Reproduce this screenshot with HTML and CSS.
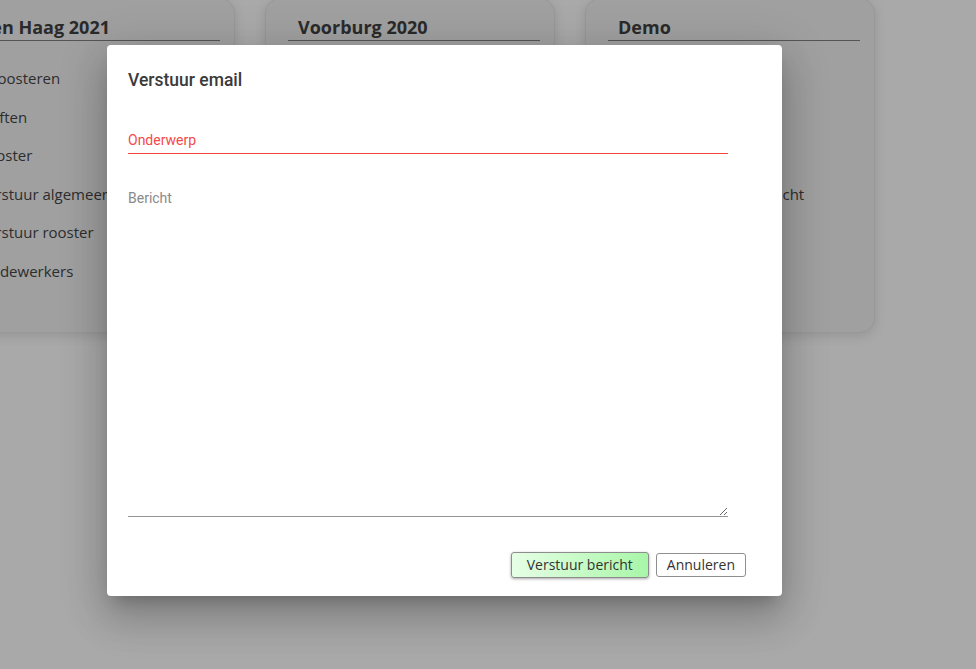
FILE: index.html
```html
<!DOCTYPE html>
<html lang="nl">
<head>
<meta charset="utf-8">
<title>Verstuur email</title>
<link rel="stylesheet" href="styles.css">
</head>
<body>
<main class="cards">
  <section class="card">
    <h2 class="card-title">Den Haag 2021</h2>
    <ul class="menu">
      <li>Inroosteren</li>
      <li>Shiften</li>
      <li>Rooster</li>
      <li>Verstuur algemeen bericht</li>
      <li>Verstuur rooster</li>
      <li>Medewerkers</li>
    </ul>
  </section>
  <section class="card">
    <h2 class="card-title">Voorburg 2020</h2>
    <ul class="menu">
      <li>Inroosteren</li>
      <li>Shiften</li>
      <li>Rooster</li>
      <li>Verstuur algemeen bericht</li>
      <li>Verstuur rooster</li>
      <li>Medewerkers</li>
    </ul>
  </section>
  <section class="card">
    <h2 class="card-title">Demo</h2>
    <ul class="menu">
      <li>Inroosteren</li>
      <li>Shiften</li>
      <li>Rooster</li>
      <li>Verstuur algemeen bericht</li>
      <li>Verstuur rooster</li>
      <li>Medewerkers</li>
    </ul>
  </section>
</main>

<div class="dialog" role="dialog">
  <h1 class="dialog-title">Verstuur email</h1>
  <div class="field field-subject">
    <span class="field-label">Onderwerp</span>
  </div>
  <textarea class="message" placeholder="Bericht"></textarea>
  <div class="actions">
    <button class="btn btn-primary">Verstuur bericht</button>
    <button class="btn btn-secondary">Annuleren</button>
  </div>
</div>
</body>
</html>
```

FILE: styles.css
```css
html, body {
  margin: 0;
  padding: 0;
}

body {
  background: #a9a9a9;
  width: 976px;
  height: 669px;
  overflow: hidden;
  font-family: "Open Sans", "Noto Sans", sans-serif;
}

.cards {
  display: flex;
  gap: 30px;
  margin-left: -55px;
  margin-top: -2px;
}

.card {
  flex: 0 0 290px;
  height: 335px;
  box-sizing: border-box;
  background: #a0a0a0;
  border: 1px solid #989898;
  border-radius: 15px;
  box-shadow: 0 3px 12px rgba(0, 0, 0, 0.12);
  padding: 16px 14px 0 22px;
}

.card-title {
  margin: 0;
  font-size: 18px;
  font-weight: 700;
  line-height: 24px;
  color: #2a2a2a;
  padding-left: 10px;
  padding-bottom: 1px;
  border-bottom: 1px solid #555;
}

.menu {
  list-style: none;
  margin: 0;
  padding: 26px 0 0 10px;
}

.menu li {
  font-size: 15px;
  line-height: 22px;
  height: 38.5px;
  color: #2d2d2d;
  white-space: nowrap;
}

.dialog {
  position: absolute;
  left: 107px;
  top: 45px;
  width: 675px;
  height: 551px;
  box-sizing: border-box;
  background: #fff;
  border-radius: 4px;
  padding: 24px 54px 18px 21px;
  display: flex;
  flex-direction: column;
  box-shadow: 0 11px 15px -7px rgba(0, 0, 0, 0.2),
              0 24px 38px 3px rgba(0, 0, 0, 0.14),
              0 9px 46px 8px rgba(0, 0, 0, 0.12);
  font-family: Roboto, "Noto Sans", sans-serif;
}

.dialog-title {
  margin: 0;
  font-size: 17.5px;
  font-weight: 500;
  line-height: 22px;
  color: #3a3a3a;
}

.field-subject {
  margin-top: 35px;
  padding: 6px 0 5px;
  border-bottom: 1px solid #f0463c;
  width: 600px;
}

.field-label {
  display: block;
  font-size: 14px;
  line-height: 16px;
  color: #f44a48;
}

.message {
  display: block;
  width: 600px;
  height: 363px;
  box-sizing: border-box;
  margin: 0;
  padding: 36px 0 0 0;
  border: none;
  border-bottom: 1px solid #949494;
  outline: none;
  resize: vertical;
  font-family: Roboto, "Noto Sans", sans-serif;
  font-size: 14px;
  line-height: 16px;
  color: #333;
  background: #fff;
}

.message::placeholder {
  color: #8a8a8a;
}

.actions {
  display: flex;
  justify-content: flex-end;
  align-items: center;
  gap: 7px;
  margin-top: 35px;
  margin-right: -18px;
}

.btn {
  font-family: "Open Sans", "Noto Sans", sans-serif;
  font-size: 14px;
  line-height: 18px;
  color: #333;
  border-radius: 3px;
  cursor: pointer;
  margin: 0;
}

.btn-primary {
  height: 26px;
  padding: 0 15px;
  border: 1px solid #8c8c8c;
  background: linear-gradient(to right, #e6ffe6, #a8f6a8);
  box-shadow: 0 1px 3px rgba(0, 0, 0, 0.35);
}

.btn-secondary {
  height: 24px;
  padding: 0 10px;
  border: 1px solid #8f8f8f;
  background: #fff;
}
```
